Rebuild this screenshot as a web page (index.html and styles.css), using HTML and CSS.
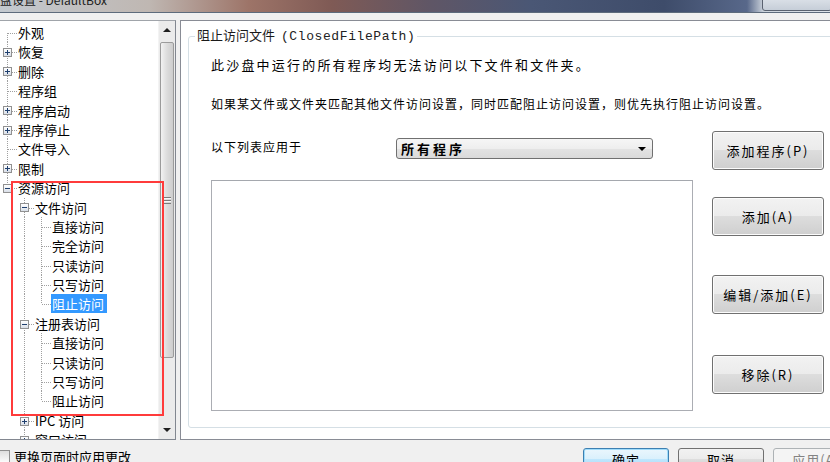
FILE: index.html
```html
<!DOCTYPE html>
<html lang="zh-CN">
 <head>
	<title>沙盘设置 - DefaultBox</title>
	<meta charset="utf-8"/>
	<link rel="stylesheet" href="styles.css">
 </head>

 <body>
	<div id="wrap">
		<div class="titlebar">
			<span class="caption">盘设置 - DefaultBox</span>
			<span class="capbtns"></span>
		</div>

		<div class="main">
			<div class="treebox">
				<div class="tree">
					<div class="row"><span class="conn first"></span><span class="label">外观</span></div>
					<div class="row"><span class="conn mid"><i class="box plus"></i></span><span class="label">恢复</span></div>
					<div class="row"><span class="conn mid"><i class="box plus"></i></span><span class="label">删除</span></div>
					<div class="row"><span class="conn mid"></span><span class="label">程序组</span></div>
					<div class="row"><span class="conn mid"><i class="box plus"></i></span><span class="label">程序启动</span></div>
					<div class="row"><span class="conn mid"><i class="box plus"></i></span><span class="label">程序停止</span></div>
					<div class="row"><span class="conn mid"></span><span class="label">文件导入</span></div>
					<div class="row"><span class="conn mid"><i class="box plus"></i></span><span class="label">限制</span></div>
					<div class="row"><span class="conn last"><i class="box minus"></i></span><span class="label">资源访问</span></div>

					<div class="row"><span class="cell"></span><span class="conn mid"><i class="box minus"></i></span><span class="label">文件访问</span></div>
					<div class="row"><span class="cell"></span><span class="cell line"></span><span class="conn mid"></span><span class="label">直接访问</span></div>
					<div class="row"><span class="cell"></span><span class="cell line"></span><span class="conn mid"></span><span class="label">完全访问</span></div>
					<div class="row"><span class="cell"></span><span class="cell line"></span><span class="conn mid"></span><span class="label">只读访问</span></div>
					<div class="row"><span class="cell"></span><span class="cell line"></span><span class="conn mid"></span><span class="label">只写访问</span></div>
					<div class="row"><span class="cell"></span><span class="cell line"></span><span class="conn last"></span><span class="label on">阻止访问</span></div>

					<div class="row"><span class="cell"></span><span class="conn mid"><i class="box minus"></i></span><span class="label">注册表访问</span></div>
					<div class="row"><span class="cell"></span><span class="cell line"></span><span class="conn mid"></span><span class="label">直接访问</span></div>
					<div class="row"><span class="cell"></span><span class="cell line"></span><span class="conn mid"></span><span class="label">只读访问</span></div>
					<div class="row"><span class="cell"></span><span class="cell line"></span><span class="conn mid"></span><span class="label">只写访问</span></div>
					<div class="row"><span class="cell"></span><span class="cell line"></span><span class="conn last"></span><span class="label">阻止访问</span></div>

					<div class="row"><span class="cell"></span><span class="conn mid"><i class="box plus"></i></span><span class="label">IPC 访问</span></div>
					<div class="row"><span class="cell"></span><span class="conn mid"><i class="box plus"></i></span><span class="label">窗口访问</span></div>
				</div>
				<div class="scroll">
					<div class="sb-btn"><i class="arr up"></i></div>
					<div class="sb-track"><div class="thumb"><i class="grip"></i></div></div>
					<div class="sb-btn"><i class="arr down"></i></div>
				</div>
			</div>

			<div class="mark"></div>

			<div class="page">
				<fieldset class="group">
					<legend>阻止访问文件 <span class="mono">(ClosedFilePath)</span></legend>
					<p class="intro">此沙盘中运行的所有程序均无法访问以下文件和文件夹。</p>
					<p class="note">如果某文件或文件夹匹配其他文件访问设置，同时匹配阻止访问设置，则优先执行阻止访问设置。</p>

					<div class="apply">
						<span class="apply-label">以下列表应用于</span>
						<div class="select"><span>所有程序</span><i class="arr down"></i></div>
						<button class="btn">添加程序(P)</button>
					</div>

					<div class="listrow">
						<div class="list"></div>
						<div class="btns">
							<button class="btn add">添加(A)</button>
							<button class="btn edit">编辑/添加(E)</button>
							<button class="btn del">移除(R)</button>
						</div>
					</div>
				</fieldset>
			</div>
		</div>

		<div class="footer">
			<label class="opt"><span class="check"></span>更换页面时应用更改</label>
			<button class="fbtn ok">确定</button>
			<button class="fbtn">取消</button>
			<button class="fbtn off">应用(A)</button>
		</div>
	</div>
 </body>
</html>
```

FILE: styles.css
```css
*{margin:0; padding:0; box-sizing:border-box;}
html,body{width:830px; height:462px; overflow:hidden;}
body{background:#f0f0f0; font-family:"Noto Sans CJK SC", "Liberation Sans", sans-serif; font-size:13px; color:#000;}
button{font-family:inherit; color:#000;}

/*######### wrap #########*/
	#wrap{width:830px; height:462px;}

/*######### titlebar (흐린 유리창 영역) #########*/
	.titlebar{display:flex; height:13px; overflow:hidden; border-bottom:1px solid #5d6b7c;
		background:linear-gradient(to right, #c3c9cf 0%, #bfb7b2 18%, #9d7468 30%, #7f5a55 40%, #5f5666 52%, #4a5775 64%, #3e4c6a 80%, #58688a 90%, #cdd4dc 92%, #dfe4ea 100%);}
	.caption{display:block; flex:none; margin-top:-8px; font-family:"Noto Sans CJK SC", sans-serif; font-size:12px; line-height:16px; color:#1c1c1c;}
	.capbtns{display:block; flex:none; width:70px; height:20px; margin:-9px -2px 0 auto; border:1px solid #5a6270; border-radius:3px; background:linear-gradient(#e8ecf1, #c6ced8);}

/*######### main #########*/
	.main{position:relative; display:flex; height:420px; margin-top:7px;}

/*######### tree box #########*/
	.treebox{display:flex; flex:none; width:177px; height:420px; margin-left:-1px; border:1px solid #828790; border-top-color:#a0a4aa; background:#fff;}
	.tree{flex:1; padding-top:2px; overflow:hidden; white-space:nowrap;}
	.row{display:flex; height:19.4px; line-height:19px;}
	.cell, .conn{display:flex; align-items:center; flex:none; width:17px; height:100%;}

	/* 점선 : 세로줄, 가로줄 */
	.line{background:repeating-linear-gradient(to bottom, #a0a0a0 0 1px, transparent 1px 2px) 7px 0 / 1px 100% no-repeat;}
	.conn.mid{background:repeating-linear-gradient(to bottom, #a0a0a0 0 1px, transparent 1px 2px) 7px 0 / 1px 100% no-repeat,
		repeating-linear-gradient(to right, #a0a0a0 0 1px, transparent 1px 2px) 8px 10px / 9px 1px no-repeat;}
	.conn.first{background:repeating-linear-gradient(to bottom, #a0a0a0 0 1px, transparent 1px 2px) 7px 10px / 1px 10px no-repeat,
		repeating-linear-gradient(to right, #a0a0a0 0 1px, transparent 1px 2px) 8px 10px / 9px 1px no-repeat;}
	.conn.last{background:repeating-linear-gradient(to bottom, #a0a0a0 0 1px, transparent 1px 2px) 7px 0 / 1px 10px no-repeat,
		repeating-linear-gradient(to right, #a0a0a0 0 1px, transparent 1px 2px) 8px 10px / 9px 1px no-repeat;}

	.box{display:block; width:9px; height:9px; margin:1px 0 0 3px; border:1px solid #919191;}
	.plus{background:linear-gradient(#1f3f6e,#1f3f6e) center / 5px 1px no-repeat, linear-gradient(#1f3f6e,#1f3f6e) center / 1px 5px no-repeat, linear-gradient(#fff, #d9dfe8);}
	.minus{background:linear-gradient(#1f3f6e,#1f3f6e) center / 5px 1px no-repeat, linear-gradient(#fff, #d9dfe8);}

	.label{padding:0 3px 0 1px; height:19px;}
	.label.on{background:#3399ff; color:#fff;}

/*######### scrollbar #########*/
	.scroll{display:flex; flex-direction:column; width:17px; height:100%; background:#ebebeb; border-left:1px solid #f3f3f3;}
	.sb-btn{display:flex; align-items:center; justify-content:center; height:18px;}
	.sb-track{flex:1; padding:3px 1px 0;}
	.thumb{display:flex; align-items:center; justify-content:center; height:316px; border:1px solid #9b9b9b; border-radius:2px; background:linear-gradient(to right, #f2f2f2, #dcdcdc 50%, #cdcdcd);}
	.grip{display:block; width:7px; height:7px; background:repeating-linear-gradient(to bottom, #7b7b7b 0 1px, #f8f8f8 1px 2px, transparent 2px 3px);}

	.arr{display:block; width:0; height:0; border-left:4px solid transparent; border-right:4px solid transparent;}
	.arr.up{border-bottom:4px solid #1e1e1e;}
	.arr.down{border-top:4px solid #1e1e1e;}

/*######### 빨간 표시 (tree 위에 겹침) #########*/
	.mark{position:absolute; left:11px; top:161px; width:153px; height:235px; border:2px solid #ff3b3b;}

/*######### page (오른쪽) #########*/
	.page{display:flex; flex:1; height:420px; margin:0 -12px 0 4px; padding:6px 0 11px 7px; border:1px solid #898c95; background:#fff;}
	.group{flex:1; min-width:0; padding:0 0 0 22px; border:1px solid #d5dfe5; border-radius:3px;}
	.group legend{margin-left:-16px; padding:0 2px; font-size:13px; line-height:16px; color:#1a1a1a;}
	.mono{margin-left:3px; font-family:"Liberation Mono", monospace; font-size:13px; letter-spacing:0.6px; color:#222;}

	.intro{margin-top:10px; font-size:13px; line-height:20px; letter-spacing:2.2px;}
	.note{margin-top:20px; font-size:12px; line-height:18px; letter-spacing:1px;}

/*######### apply row #########*/
	.apply{display:flex; align-items:flex-start; height:39px; margin-top:18px;}
	.apply-label{flex:none; width:185px; margin-top:8px; font-size:12px; line-height:16px; letter-spacing:1px;}
	.select{display:flex; flex:none; align-items:center; justify-content:space-between; width:257px; height:21px; margin-top:7px; padding:0 6px 0 4px; border:1px solid #707070; border-radius:3px;
		background:linear-gradient(#f6f6f6, #eeeeee 50%, #e3e3e3 50%, #dadada);}
	.select span{font-weight:700; font-size:13px; letter-spacing:3px;}
	.select .arr.down{border-top-color:#000;}

/*######### buttons #########*/
	.btn{display:block; flex:none; width:112px; height:39px; margin-left:59px; border:1px solid #707070; border-radius:3px; font-size:13px; letter-spacing:2px;
		background:linear-gradient(#f2f2f2, #ebebeb 50%, #dddddd 50%, #cfcfcf); box-shadow:inset 0 0 0 1px #fcfcfc;}

/*######### list row #########*/
	.listrow{display:flex; margin-top:10px;}
	.list{flex:none; width:482px; height:231px; border:1px solid #abadb3; border-top-color:#a5a8ae; background:#fff;}
	.btns{display:flex; flex-direction:column;}
	.btns .btn{margin-left:19px;}
	.btn.add{margin-top:17px;}
	.btn.edit{margin-top:39px;}
	.btn.del{margin-top:41px;}

/*######### footer #########*/
	.footer{display:flex; align-items:flex-start; height:22px;}
	.opt{display:flex; flex:none; align-items:flex-start; width:583px; padding-top:9px; font-size:13px; line-height:16px;}
	.check{display:block; flex:none; width:13px; height:13px; margin:1px 4px 0 -3px; border:1px solid #8f8f8f; background:linear-gradient(#dedede, #fbfbfb);}
	.fbtn{flex:none; width:86px; height:23px; margin:8px 9px 0 0; padding-top:1px; border:1px solid #707070; border-radius:3px; font-size:13px; line-height:18px; letter-spacing:1px;
		background:linear-gradient(#f2f2f2, #ebebeb 50%, #dddddd 50%, #cfcfcf);}
	.fbtn.ok{border-color:#3c7fb1; background:linear-gradient(#eaf6fd, #d9f0fc 50%, #bee6fd 50%, #a7d9f5); box-shadow:inset 0 0 0 1px #9fdcfb;}
	.fbtn.off{border-color:#adb2b5; background:#f4f4f4; color:#838383;}
```
